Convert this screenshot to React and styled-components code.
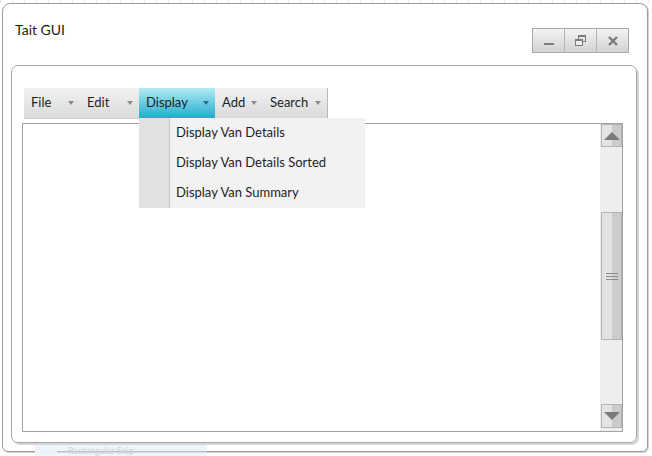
import React from 'react';
import styled, { createGlobalStyle } from 'styled-components';

const GlobalStyle = createGlobalStyle`
  body {
    margin: 0;
    background: #ffffff;
    font-family: Lato, "Noto Sans", "Liberation Sans", sans-serif;
    color: #1e1e1e;
  }
`;

const Page = styled.div`
  position: relative;
  width: 652px;
  height: 456px;
  padding: 3px 0 0 2px;
  box-sizing: border-box;
  overflow: hidden;
  background:
    repeating-linear-gradient(90deg, #e4e4e4 0 1px, transparent 1px 12px) top left / 100% 3px no-repeat,
    #ffffff;
`;

const Window = styled.div`
  position: relative;
  z-index: 1;
  width: 646px;
  height: 449px;
  box-sizing: border-box;
  border: 1px solid #9c9c9c;
  border-radius: 8px 8px 6px 6px;
  box-shadow: 1px 1px 0 #d2d2d2;
  background: #ffffff;
  padding: 0 10px 8px 8px;
  display: flex;
  flex-direction: column;
`;

const TitleBar = styled.div`
  height: 61px;
  display: flex;
  align-items: flex-start;
  justify-content: space-between;
`;

const Title = styled.div`
  margin: 18px 0 0 4px;
  font-size: 14px;
  line-height: 16px;
  color: #1a1a1a;
`;

const WindowButtons = styled.div`
  display: flex;
  margin: 24px 8px 0 0;
  border: 1px solid #a9a9a9;
`;

const WindowButton = styled.div`
  width: 31px;
  height: 23px;
  display: flex;
  align-items: center;
  justify-content: center;
  background: linear-gradient(#f3f3f3, #d3d3d3);
  border-left: ${(p) => (p.first ? 'none' : '1px solid #b4b4b4')};
`;

const Panel = styled.div`
  flex: 1;
  border: 1px solid #a6a6a6;
  border-radius: 7px;
  box-shadow: 2px 2px 0 #d6d6d6;
  padding: 22px 13px 10px 10px;
  display: flex;
  flex-direction: column;
  gap: 5px;
`;

const MenuBar = styled.div`
  position: relative;
  z-index: 2;
  display: flex;
  align-self: flex-start;
  margin-left: 2px;
  height: 30px;
  background: linear-gradient(#f2f2f2, #dadada);
  border-right: 1px solid #b8b8b8;
  box-shadow: 0 1px 0 #cfcfcf;
`;

const MenuItem = styled.div`
  position: relative;
  width: ${(p) => p.w}px;
  box-sizing: border-box;
  padding: 0 6px 2px 7px;
  display: flex;
  align-items: center;
  justify-content: space-between;
  font-size: 13px;
  background: ${(p) => (p.active ? 'linear-gradient(#b6e9f4, #59c6dd 60%, #25abc8)' : 'transparent')};
`;

const Caret = styled.span`
  width: 0;
  height: 0;
  margin-top: 2px;
  border-left: 3.5px solid transparent;
  border-right: 3.5px solid transparent;
  border-top: 4px solid ${(p) => (p.active ? '#2f6e80' : '#8a8a8a')};
`;

const Dropdown = styled.div`
  position: absolute;
  top: 100%;
  left: 0;
  width: 226px;
  background: linear-gradient(90deg, #e1e1e1 0 30px, #c9c9c9 30px 31px, #f2f2f2 31px);
`;

const DropItem = styled.div`
  height: 30px;
  line-height: 28px;
  padding-left: 37px;
  font-size: 13px;
  white-space: nowrap;
`;

const TextArea = styled.div`
  flex: 1;
  border: 1px solid #a3a3a3;
  background: #ffffff;
  display: flex;
  justify-content: flex-end;
`;

const ScrollBar = styled.div`
  width: 22px;
  background: #eeeeee;
  display: flex;
  flex-direction: column;
  padding: 0 0 3px 1px;
  box-sizing: border-box;
`;

const ScrollButton = styled.div`
  height: ${(p) => p.h}px;
  box-sizing: border-box;
  border: 1px solid #b3b3b3;
  background: linear-gradient(90deg, #e4e4e4 0 50%, #cbcbcb 50%);
  display: flex;
  align-items: center;
  justify-content: center;
`;

const Arrow = styled.span`
  width: 0;
  height: 0;
  border-left: 8px solid transparent;
  border-right: 8px solid transparent;
  ${(p) => (p.down ? 'border-top: 8px solid #7a7a7a;' : 'border-bottom: 8px solid #7a7a7a;')}
`;

const Spacer = styled.div`
  flex: 1;
`;

const Thumb = styled.div`
  margin-top: ${(p) => p.offset}px;
  height: 128px;
  box-sizing: border-box;
  border: 1px solid #b3b3b3;
  background: linear-gradient(90deg, #e2e2e2 0 50%, #cdcdcd 50%);
  display: flex;
  flex-direction: column;
  align-items: center;
  justify-content: center;
  gap: 2px;
`;

const Grip = styled.span`
  width: 12px;
  height: 1px;
  background: #8c8c8c;
`;

const Snip = styled.div`
  position: absolute;
  z-index: 3;
  left: 35px;
  top: 445px;
  width: 172px;
  height: 11px;
  display: flex;
  align-items: center;
  gap: 11px;
  background: rgba(214, 232, 250, 0.45);
  font-size: 9px;
  line-height: 11px;
  color: #d2d2d2;
`;

const SnipIcon = styled.span`
  width: 22px;
  height: 11px;
  background: rgba(236, 244, 252, 0.9);
`;

const menus = [
  { label: 'File', w: 56 },
  { label: 'Edit', w: 59 },
  { label: 'Display', w: 76, active: true },
  { label: 'Add', w: 48 },
  { label: 'Search', w: 64 },
];

const displayItems = ['Display Van Details', 'Display Van Details Sorted', 'Display Van Summary'];

const App = () => (
  <Page>
    <GlobalStyle />
    <Window>
      <TitleBar>
        <Title>Tait GUI</Title>
        <WindowButtons>
          <WindowButton first>
            <svg width="12" height="12" viewBox="0 0 12 12">
              <rect x="1" y="8" width="10" height="2" fill="#7d7d7d" />
            </svg>
          </WindowButton>
          <WindowButton>
            <svg width="13" height="13" viewBox="0 0 13 13">
              <rect x="4.5" y="1.5" width="7" height="6" fill="none" stroke="#7d7d7d" />
              <rect x="4.5" y="1.5" width="7" height="1.5" fill="#7d7d7d" />
              <rect x="1.5" y="5.5" width="7" height="6" fill="#ececec" stroke="#7d7d7d" />
              <rect x="1.5" y="5.5" width="7" height="1.5" fill="#7d7d7d" />
            </svg>
          </WindowButton>
          <WindowButton>
            <svg width="12" height="12" viewBox="0 0 12 12">
              <path d="M2 2 L10 10 M10 2 L2 10" stroke="#7a7a7a" strokeWidth="2.4" />
            </svg>
          </WindowButton>
        </WindowButtons>
      </TitleBar>
      <Panel>
        <MenuBar>
          {menus.map((m) => (
            <MenuItem key={m.label} w={m.w} active={m.active}>
              <span>{m.label}</span>
              <Caret active={m.active} />
              {m.active && (
                <Dropdown>
                  {displayItems.map((d) => (
                    <DropItem key={d}>{d}</DropItem>
                  ))}
                </Dropdown>
              )}
            </MenuItem>
          ))}
        </MenuBar>
        <TextArea>
          <ScrollBar>
            <ScrollButton h={23}>
              <Arrow />
            </ScrollButton>
            <Thumb offset={65}>
              <Grip />
              <Grip />
              <Grip />
            </Thumb>
            <Spacer />
            <ScrollButton h={24}>
              <Arrow down />
            </ScrollButton>
          </ScrollBar>
        </TextArea>
      </Panel>
    </Window>
    <Snip>
      <SnipIcon />
      <span>Rectangular Snip</span>
    </Snip>
  </Page>
);

export default App;
